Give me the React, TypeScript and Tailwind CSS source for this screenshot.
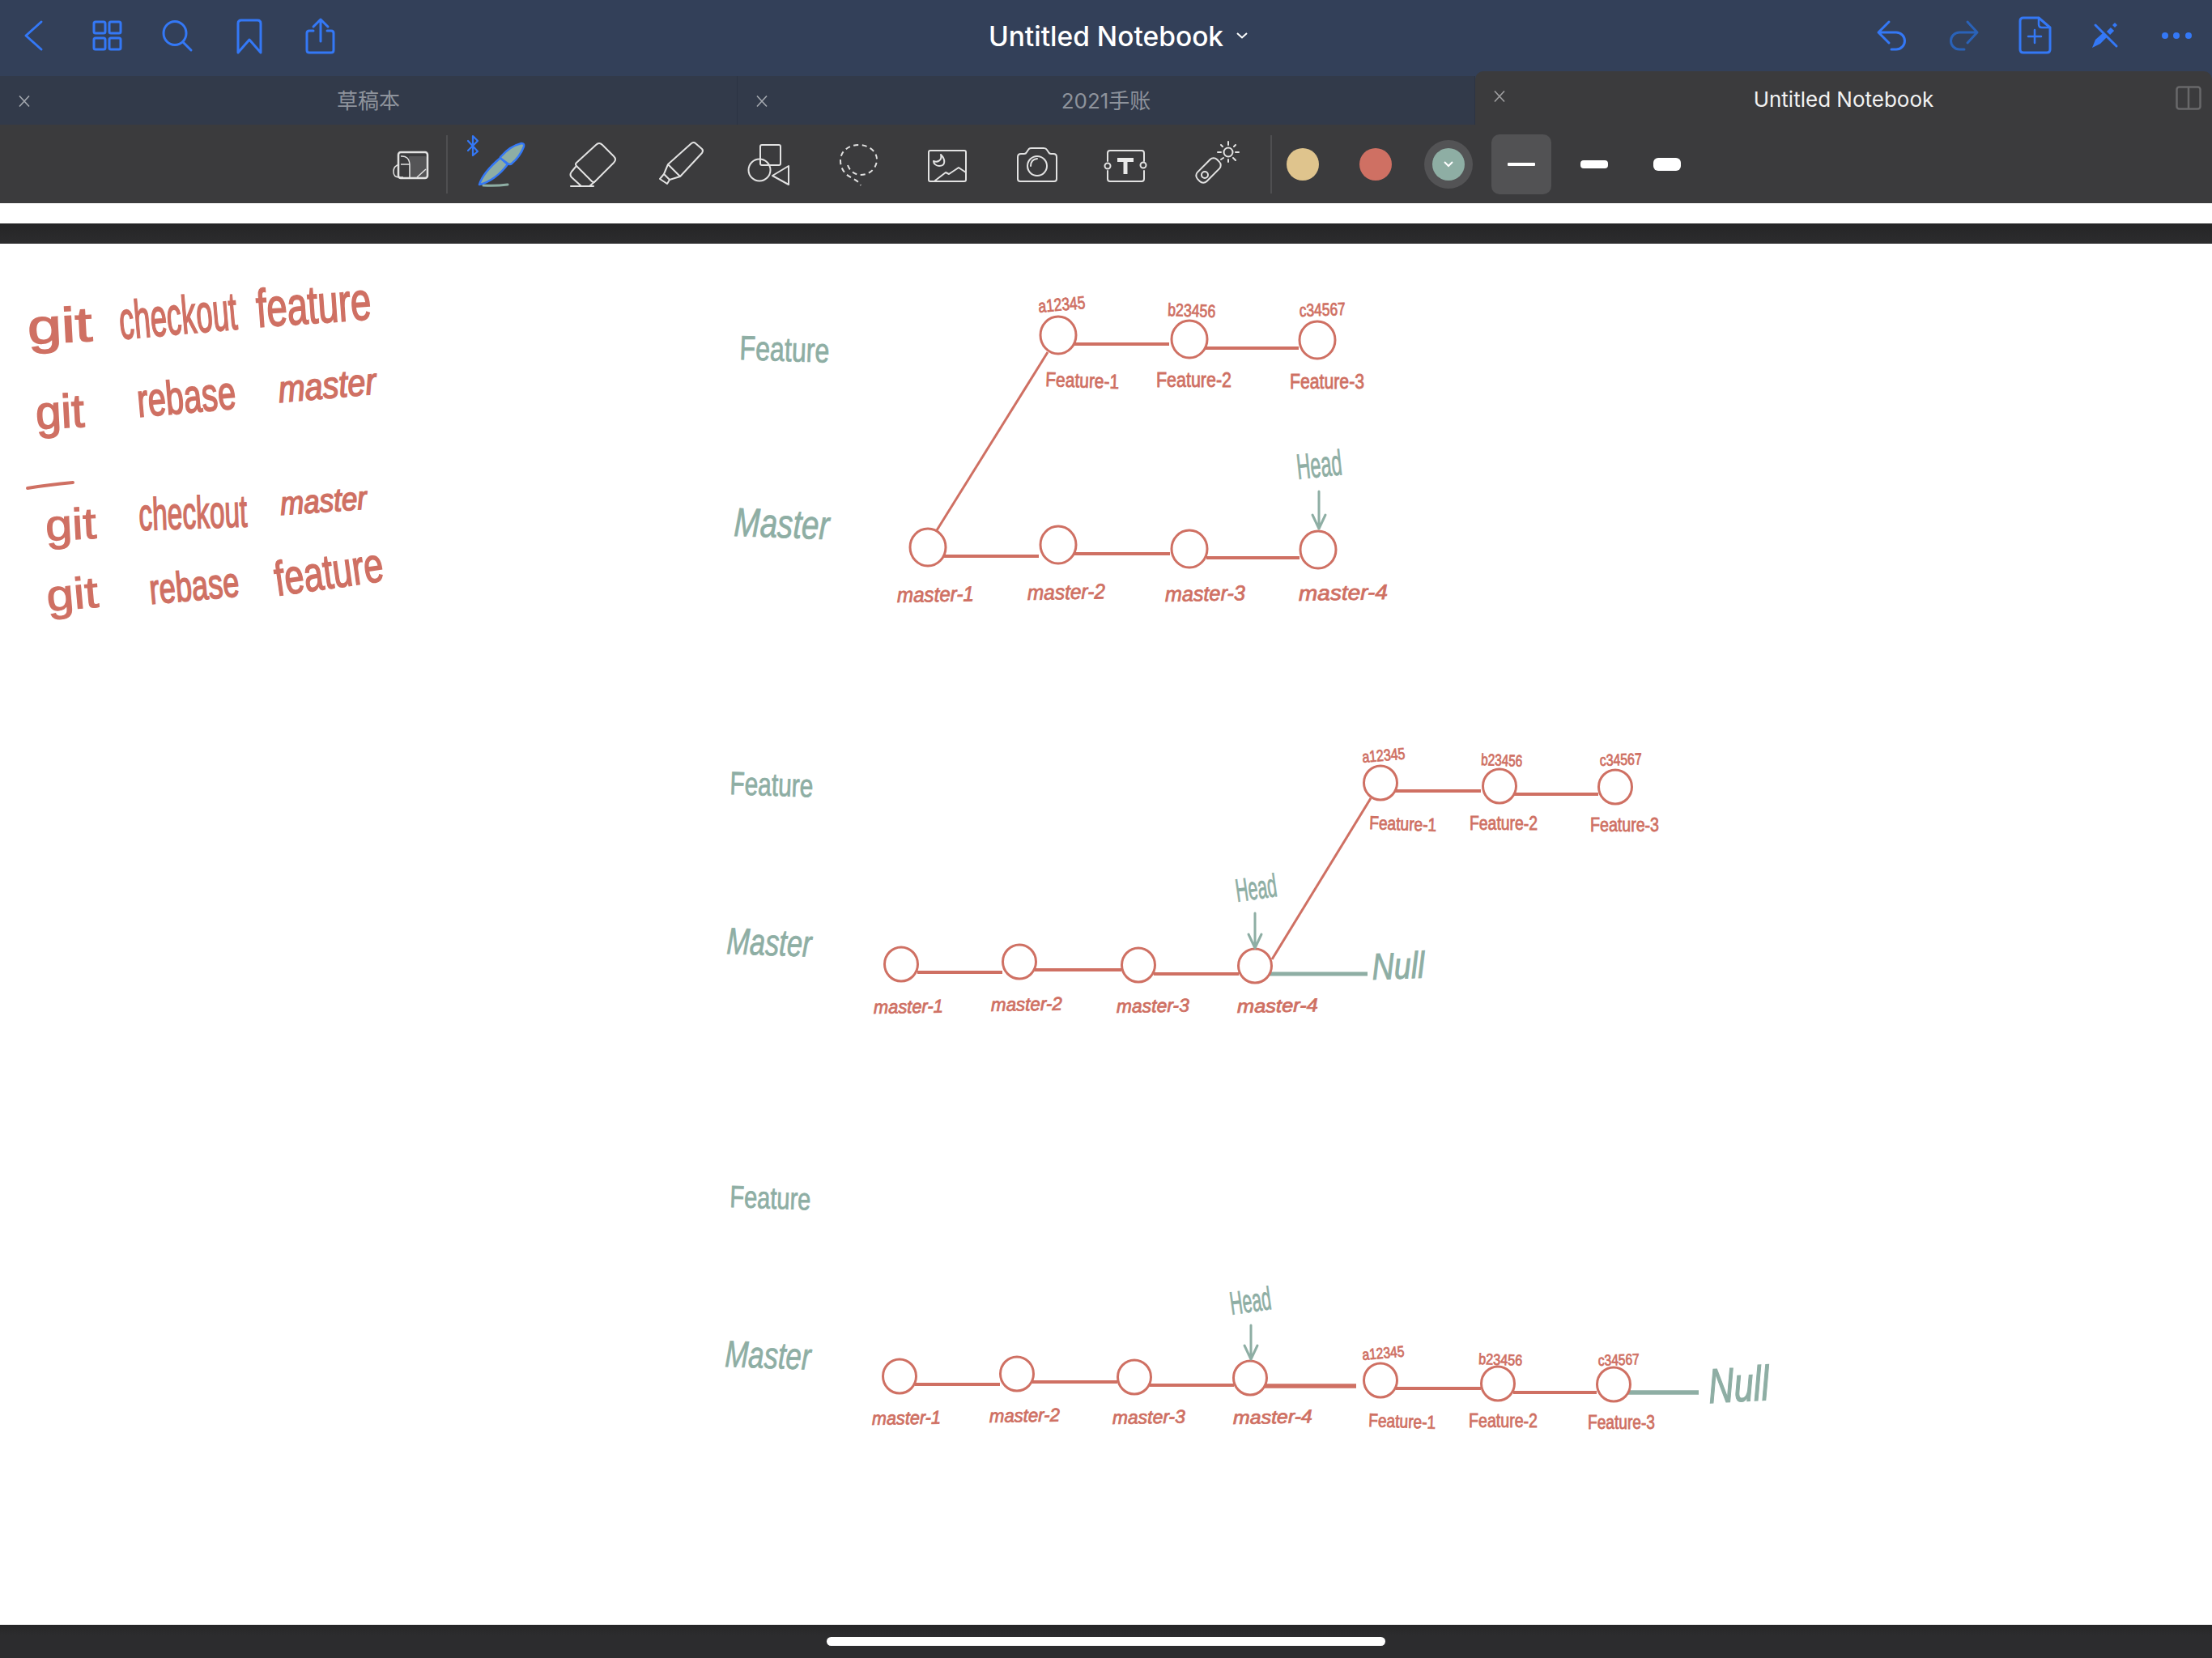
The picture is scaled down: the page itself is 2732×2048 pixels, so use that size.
import type { ReactNode } from 'react';

const blue = '#3478f6';
const ink = '#cf7063';
const sage = '#8eaea4';
const line = '#e2e2e2';

function TopIcon({ box, children }: { box: number; children: ReactNode }) {
  return (
    <svg
      viewBox={`${box} 20 48 48`}
      className="h-12 w-12 shrink-0"
      fill="none"
      stroke={blue}
      strokeWidth={3}
      strokeLinecap="round"
      strokeLinejoin="round"
    >
      {children}
    </svg>
  );
}

// tool slots are 110 wide, drawn in page coordinates
function ToolIcon({ box, children }: { box: number; children: ReactNode }) {
  return (
    <svg
      viewBox={`${box} 154 110 97`}
      className="h-[97px] w-[110px] shrink-0"
      fill="none"
      stroke={line}
      strokeWidth={2}
      strokeLinecap="round"
      strokeLinejoin="round"
    >
      {children}
    </svg>
  );
}

function Tab({ title, active }: { title: string; active?: boolean }) {
  return (
    <div
      className={
        active
          ? 'relative flex h-[66px] flex-1 items-center justify-center rounded-t-[10px] bg-[#3b3b3d] pt-[3px] text-[26px] text-[#f2f2f2]'
          : 'relative flex h-[60px] flex-1 items-center justify-center border-r border-[#2c3444] bg-[#323a4a] pt-[1px] text-[26px] text-[#8e939c]'
      }
    >
      <svg
        viewBox="0 0 16 16"
        className="absolute left-[22px] top-[23px] h-4 w-4"
        fill="none"
        stroke={active ? '#a0a0a2' : '#a5a9b0'}
        strokeWidth={1.6}
      >
        <path d="M2 1.5 14 14.5M14 1.5 2 14.5" />
      </svg>
      {title}
      {active && (
        <svg viewBox="0 0 32 30" className="absolute right-[13px] top-[18px] h-[30px] w-8" fill="none" stroke="#68686a" strokeWidth={2.5}>
          <rect x="1.5" y="1.5" width="29" height="27" rx="3" />
          <path d="M16 1.5v27" />
        </svg>
      )}
    </div>
  );
}

type Ink = { t: string; x: number; w: number; y: number; s: number; r?: number; c?: string; b?: number; u?: boolean };

function InkText({ t, x, w, y, s, r = 0, c = ink, b = 0.8, u }: Ink) {
  return (
    <text
      x={x}
      y={y}
      fontSize={s}
      textLength={w}
      lengthAdjust="spacingAndGlyphs"
      transform={`rotate(${r} ${x} ${y})`}
      fill={c}
      stroke={c}
      strokeWidth={b}
      className={u ? "font-['Liberation_Sans',sans-serif]" : "font-['Liberation_Sans',sans-serif] italic"}
    >
      {t}
    </text>
  );
}

type Node = [number, number];
type Seg = [number, number, number, number, number?, string?];

function Nodes({ nodes, rx, ry }: { nodes: Node[]; rx: number; ry: number }) {
  return (
    <>
      {nodes.map(([cx, cy]) => (
        <ellipse key={`${cx}-${cy}`} cx={cx} cy={cy} rx={rx} ry={ry} fill="#fff" stroke={ink} strokeWidth={3} />
      ))}
    </>
  );
}

function Segs({ segs }: { segs: Seg[] }) {
  return (
    <>
      {segs.map(([x1, y1, x2, y2, w = 3, c = ink]) => (
        <line key={`${x1}-${y1}`} x1={x1} y1={y1} x2={x2} y2={y2} stroke={c} strokeWidth={w} />
      ))}
    </>
  );
}

function HeadArrow({ x, y1, y2 }: { x: number; y1: number; y2: number }) {
  return (
    <path
      d={`M${x} ${y1}V${y2}M${x - 8} ${y2 - 17}L${x} ${y2}L${x + 8} ${y2 - 17}`}
      fill="none"
      stroke={sage}
      strokeWidth={3}
      strokeLinecap="round"
      strokeLinejoin="round"
    />
  );
}

const notes: Ink[] = [
  { t: 'git', x: 35, w: 80, y: 425, s: 60, r: -3, b: 1.6, u: true },
  { t: 'checkout', x: 149, w: 146, y: 419, s: 66, r: -5, b: 1.8, u: true },
  { t: 'feature', x: 318, w: 142, y: 404, s: 66, r: -4, b: 1.8, u: true },
  { t: 'git', x: 45, w: 60, y: 530, s: 58, r: -3, b: 1.6, u: true },
  { t: 'rebase', x: 171, w: 122, y: 515, s: 58, r: -5, b: 1.8, u: true },
  { t: 'master', x: 345, w: 121, y: 497, s: 46, r: -5, b: 1.6 },
  { t: 'git', x: 57, w: 63, y: 668, s: 54, r: -3, b: 1.2, u: true },
  { t: 'checkout', x: 172, w: 134, y: 655, s: 56, r: -2, b: 1.6, u: true },
  { t: 'master', x: 347, w: 107, y: 636, s: 40, r: -4, b: 1.6 },
  { t: 'git', x: 59, w: 64, y: 755, s: 54, r: -5, b: 1.2, u: true },
  { t: 'rebase', x: 186, w: 111, y: 746, s: 52, r: -5, b: 1.6, u: true },
  { t: 'feature', x: 342, w: 135, y: 736, s: 60, r: -8, b: 1.6, u: true },
];

const labels: Ink[] = [
  // first diagram
  { t: 'Feature', x: 913, w: 111, y: 444, s: 42, r: 2, c: sage, u: true },
  { t: 'Master', x: 906, w: 118, y: 662, s: 50, r: 2, c: sage },
  { t: 'Head', x: 1603, w: 56, y: 592, s: 44, r: -6, c: sage, u: true },
  { t: 'a12345', x: 1283, w: 58, y: 386, s: 22, r: -5, u: true },
  { t: 'b23456', x: 1442, w: 59, y: 390, s: 22, r: 2, u: true },
  { t: 'c34567', x: 1605, w: 57, y: 391, s: 22, r: -2, u: true },
  { t: 'Feature-1', x: 1291, w: 91, y: 477, s: 25, r: 2, u: true },
  { t: 'Feature-2', x: 1428, w: 93, y: 478, s: 25, u: true },
  { t: 'Feature-3', x: 1593, w: 92, y: 480, s: 25, u: true },
  { t: 'master-1', x: 1108, w: 95, y: 744, s: 26, r: -1 },
  { t: 'master-2', x: 1269, w: 96, y: 741, s: 26, r: -1 },
  { t: 'master-3', x: 1439, w: 99, y: 743, s: 26, r: -1 },
  { t: 'master-4', x: 1604, w: 110, y: 742, s: 26, r: -1 },
  // second diagram
  { t: 'Feature', x: 901, w: 103, y: 981, s: 40, r: 2, c: sage, u: true },
  { t: 'Master', x: 897, w: 105, y: 1178, s: 46, r: 2, c: sage },
  { t: 'Head', x: 1528, w: 51, y: 1114, s: 40, r: -8, c: sage, u: true },
  { t: 'Null', x: 1695, w: 65, y: 1210, s: 46, r: -2, c: sage, b: 1 },
  { t: 'a12345', x: 1683, w: 53, y: 942, s: 20, r: -5, u: true },
  { t: 'b23456', x: 1829, w: 51, y: 945, s: 20, r: 2, u: true },
  { t: 'c34567', x: 1976, w: 52, y: 946, s: 20, r: -2, u: true },
  { t: 'Feature-1', x: 1691, w: 83, y: 1024, s: 23, r: 2, u: true },
  { t: 'Feature-2', x: 1815, w: 84, y: 1025, s: 23, u: true },
  { t: 'Feature-3', x: 1964, w: 85, y: 1027, s: 23, u: true },
  { t: 'master-1', x: 1079, w: 86, y: 1252, s: 23, r: -1 },
  { t: 'master-2', x: 1224, w: 88, y: 1249, s: 23, r: -1 },
  { t: 'master-3', x: 1379, w: 90, y: 1251, s: 23, r: -1 },
  { t: 'master-4', x: 1528, w: 100, y: 1251, s: 23, r: -1 },
  // third diagram
  { t: 'Feature', x: 901, w: 100, y: 1491, s: 38, r: 2, c: sage, u: true },
  { t: 'Master', x: 895, w: 106, y: 1688, s: 46, r: 2, c: sage },
  { t: 'Head', x: 1521, w: 51, y: 1624, s: 40, r: -8, c: sage, u: true },
  { t: 'Null', x: 2111, w: 75, y: 1733, s: 60, r: -3, c: sage, b: 1.4 },
  { t: 'a12345', x: 1683, w: 52, y: 1680, s: 19, r: -5, u: true },
  { t: 'b23456', x: 1826, w: 54, y: 1685, s: 19, r: 2, u: true },
  { t: 'c34567', x: 1974, w: 51, y: 1687, s: 19, r: -2, u: true },
  { t: 'master-1', x: 1077, w: 85, y: 1760, s: 23, r: -1 },
  { t: 'master-2', x: 1222, w: 87, y: 1757, s: 23, r: -1 },
  { t: 'master-3', x: 1374, w: 90, y: 1759, s: 23, r: -1 },
  { t: 'master-4', x: 1523, w: 98, y: 1759, s: 23, r: -1 },
  { t: 'Feature-1', x: 1690, w: 83, y: 1762, s: 23, r: 2, u: true },
  { t: 'Feature-2', x: 1814, w: 85, y: 1763, s: 23, u: true },
  { t: 'Feature-3', x: 1961, w: 83, y: 1765, s: 23, u: true },
];

export default function App() {
  return (
    <div className="flex h-[2048px] w-[2732px] flex-col overflow-hidden bg-white font-['Inter','Noto_Sans_CJK_SC',sans-serif]">
      {/* Nav bar */}
      <header className="relative flex h-[88px] shrink-0 items-start justify-between bg-[#334059] px-5 pt-5">
        <div className="flex gap-10">
          <TopIcon box={20}>
            <path d="M51 27 32 44l19 17" />
          </TopIcon>
          <TopIcon box={108}>
            <rect x="116" y="27" width="14" height="14" rx="2" />
            <rect x="135" y="27" width="14" height="14" rx="2" />
            <rect x="116" y="47" width="14" height="14" rx="2" />
            <rect x="135" y="47" width="14" height="14" rx="2" />
          </TopIcon>
          <TopIcon box={196}>
            <ellipse cx="216" cy="41" rx="14" ry="14.5" />
            <path d="m226 52 10 10" />
          </TopIcon>
          <TopIcon box={284}>
            <path d="M294 65V29q0-4 4-4h20q4 0 4 4v36l-14-16z" />
          </TopIcon>
          <TopIcon box={372}>
            <path d="M387 38h-5q-3 0-3 3v21q0 3 3 3h27q3 0 3-3V41q0-3-3-3h-5M396 24v27M387 33l9-9 9 9" />
          </TopIcon>
        </div>
        <div className="flex gap-10">
          <TopIcon box={2312}>
            <path d="M2333 27 2320 40l13 13M2320 40h22a10.500 10.500 0 0 1 0 21h-6" />
          </TopIcon>
          <svg viewBox="2400 20 48 48" className="h-12 w-12 shrink-0" fill="none" stroke="#2a62b8" strokeWidth={3} strokeLinecap="round" strokeLinejoin="round">
            <path d="M2430 27l12 13-12 13M2442 40h-22a10.500 10.500 0 0 0 0 21h6" />
          </svg>
          <TopIcon box={2488}>
            <path d="M2518 22h-19q-4 0-4 4v35q0 4 4 4h29q4 0 4-4V34z" />
            <path d="M2518 22v8q0 4 4 4h9" strokeWidth={2.5} />
            <path d="M2513 37v16M2505 45h16" strokeWidth={2.5} />
          </TopIcon>
          <svg viewBox="2576 20 48 48" className="h-12 w-12 shrink-0" fill={blue} stroke="none">
            <path d="M2588 31l26 26" fill="none" stroke={blue} strokeWidth={3} strokeLinecap="round" />
            <path d="M2584 59l4-10 9-8 5 5-8 8z" />
            <path d="M2604 41l5-5" fill="none" stroke={blue} strokeWidth={6} />
            <path d="M2612 28l3 3-3 3-3-3z" />
          </svg>
          <svg viewBox="2664 20 48 48" className="h-12 w-12 shrink-0" fill={blue}>
            <circle cx="2674" cy="44" r="4" />
            <circle cx="2688" cy="44" r="4" />
            <circle cx="2703" cy="44" r="4" />
          </svg>
        </div>
        <div className="absolute inset-x-0 top-0 flex h-[88px] items-center justify-center pt-[2px]">
          <h1 className="relative text-[33.5px] font-medium text-white">
            Untitled Notebook
            <svg viewBox="0 0 14 8" className="absolute -right-[30px] top-[20px] h-2 w-[14px]" fill="none" stroke="#fff" strokeWidth={2}>
              <path d="m1 1 6 5.500L13 1" />
            </svg>
          </h1>
        </div>
      </header>

      {/* Tabs */}
      <div className="flex h-[66px] shrink-0 items-end bg-[#334059]">
        <Tab title="草稿本" />
        <Tab title="2021手账" />
        <Tab title="Untitled Notebook" active />
      </div>

      {/* Toolbar */}
      <div className="flex h-[97px] shrink-0 items-center bg-[#3b3b3d] pl-[479px]">
        <svg viewBox="479 154 56 97" className="h-[97px] w-14 shrink-0" fill="none" stroke={line} strokeWidth={2}>
          <path d="M505 193h20q2 0 2 2v24h-22z" fill="#555557" stroke="none" />
          <rect x="492" y="188" width="36" height="32" rx="3" strokeWidth={2.5} />
          <path d="M495 193q10-1 11 10v17M495 203h11M493 203q-7 2-7 9t7 7h5M515 219l11-10" strokeWidth={1.5} />
        </svg>
        <div className="ml-4 h-[72px] w-[2px] shrink-0 bg-[#4f4f51]" />
        <div className="ml-[10px] flex">
          <ToolIcon box={563}>
            <path d="M597 229q15 1 30-1" stroke={sage} strokeWidth={3} />
            <path d="M592 228c3-10 13-22 26-33l9 8c-9 12-22 22-35 25z" fill={sage} stroke={blue} strokeWidth={2.5} />
            <path d="M619 193c7-8 17-14 25-16q4 0 3 4c-3 8-9 16-15 21q-2 2-5 0l-8-6q-2-2 0-3z" fill={sage} stroke={blue} strokeWidth={2.5} />
            <path d="M578 174l12 13-6 5v-24l6 6-12 12" stroke={blue} strokeWidth={2.2} />
          </ToolIcon>
          <ToolIcon box={673}>
            <path d="M736 179q4-4 8 0l14 14q4 4 0 8l-23 23q-2 2-4 0l-19-19q-2-2 0-4z" />
            <path d="M711 206l-5 6q-3 4 0 7l12 11M728 230l7-6M705 230h28" />
          </ToolIcon>
          <ToolIcon box={783}>
            <path d="M854 177q3-2 5 0l8 7q2 2 0 5l-27 29-15-15zM825 203l-5 12 7 7 13-4M820 215l-5 6 9 6 3-5" />
          </ToolIcon>
          <ToolIcon box={893}>
            <rect x="939" y="179" width="25" height="25" rx="2" />
            <circle cx="938" cy="210" r="13.500" />
            <path d="m974 205-20 12 20 11z" />
          </ToolIcon>
          <ToolIcon box={1003}>
            <path d="M1047 204c3 8 9 12 16 12 12 0 20-9 20-19 0-10-10-18-22-18-13 0-23 8-23 19 0 8 3 13 7 17 5 5 15 7 18 14" strokeDasharray="6 4.500" strokeLinecap="butt" />
          </ToolIcon>
          <ToolIcon box={1113}>
            <rect x="1147" y="186" width="46" height="38" rx="2" />
            <path d="M1155 223l13-10 4 2 12-8 9 6M1162 191c6 6 6 14-2 14-4 0-7-3-7-6 5 2 11-1 9-8z" />
          </ToolIcon>
          <ToolIcon box={1223}>
            <path d="M1261 190h4q2 0 3-2l2-3q1-2 4-2h15q3 0 4 2l2 3q1 2 3 2h3q4 0 4 4v27q0 3-3 3h-42q-3 0-3-3v-27q0-4 4-4z" />
            <circle cx="1281" cy="205" r="12" />
            <path d="M1273 205q0-8 8-9" />
          </ToolIcon>
          <ToolIcon box={1333}>
            <path d="M1368 199v-10q0-3 3-3h39q3 0 3 3v10M1368 211v10q0 3 3 3h39q3 0 3-3v-10" />
            <circle cx="1368" cy="205" r="3.500" />
            <circle cx="1412" cy="204" r="3.500" />
            <path d="M1380 197.500h20M1390 197.500V215" stroke="#e8e8e8" strokeWidth={5} strokeLinecap="butt" />
          </ToolIcon>
          <ToolIcon box={1443}>
            <rect x="1475.500" y="202.500" width="34" height="16" rx="6" transform="rotate(-45 1492.500 210.500)" />
            <circle cx="1488" cy="216" r="4" />
            <circle cx="1517" cy="188" r="5.500" />
            <path d="M1508 197l3-2M1517 175v4M1517 197v3M1504 188h4M1526 188h4M1508 179l2 2M1523 195l3 3M1526 179l-2 2" />
          </ToolIcon>
        </div>
        <div className="ml-4 h-[72px] w-[2px] shrink-0 bg-[#4f4f51]" />
        <div className="ml-2 flex items-center gap-[30px]">
          <div className="flex h-[60px] w-[60px] items-center justify-center">
            <div className="h-10 w-10 rounded-full bg-[#dfc48d]" />
          </div>
          <div className="flex h-[60px] w-[60px] items-center justify-center">
            <div className="h-10 w-10 rounded-full bg-[#cf7063]" />
          </div>
          <div className="flex h-[60px] w-[60px] items-center justify-center rounded-full bg-[#535355]">
            <div className="flex h-10 w-10 items-center justify-center rounded-full bg-[#8eaea4]">
              <svg viewBox="0 0 12 8" className="h-2 w-3" fill="none" stroke="#fff" strokeWidth={2}>
                <path d="m1 1 5 5 5-5" />
              </svg>
            </div>
          </div>
        </div>
        <div className="ml-[23px] flex items-center gap-4">
          <div className="flex h-[74px] w-[74px] items-center justify-center rounded-[10px] bg-[#525254]">
            <div className="h-1 w-[34px] rounded-[1px] bg-white" />
          </div>
          <div className="flex h-[74px] w-[74px] items-center justify-center">
            <div className="h-[10px] w-[34px] rounded-[4px] bg-white" />
          </div>
          <div className="flex h-[74px] w-[74px] items-center justify-center">
            <div className="h-4 w-[34px] rounded-[6px] bg-white" />
          </div>
        </div>
      </div>

      <div className="h-[25px] shrink-0 bg-white" />
      <div className="h-[25px] shrink-0 bg-gradient-to-b from-[#252526] to-[#2c2c2e]" />

      {/* Notebook page */}
      <main className="flex-1 bg-white">
        <svg viewBox="0 301 2732 1706" className="block h-[1706px] w-[2732px]">
          {notes.map((n) => (
            <InkText key={`${n.t}-${n.x}`} {...n} />
          ))}
          <path d="M34 603q25-4 56-7" fill="none" stroke={ink} strokeWidth={4} strokeLinecap="round" />

          <Segs segs={[[1327, 425, 1444, 425, 4], [1489, 430, 1604, 430, 4], [1166, 687, 1283, 687, 4], [1327, 684, 1445, 684, 4], [1490, 689, 1605, 689, 4], [1294, 435, 1157, 655, 3]]} />
          <Nodes rx={22} ry={23} nodes={[[1307, 414], [1469, 419], [1627, 420], [1146, 676], [1307, 673], [1469, 678], [1628, 679]]} />
          <HeadArrow x={1629} y1={607} y2={653} />

          <Segs segs={[[1723, 977, 1829, 977, 4], [1869, 981, 1974, 981, 4], [1133, 1201, 1238, 1201, 4], [1278, 1198, 1385, 1198, 4], [1425, 1203, 1530, 1203, 4], [1566, 1203, 1689, 1203, 5, sage], [1693, 986, 1571, 1185, 3]]} />
          <Nodes rx={20.5} ry={21} nodes={[[1705, 967], [1852, 971], [1995, 972], [1113, 1191], [1259, 1188], [1406, 1192], [1550, 1193]]} />
          <HeadArrow x={1550} y1={1128} y2={1171} />

          <Segs segs={[[1130, 1710, 1235, 1710, 4], [1275, 1707, 1380, 1707, 4], [1420, 1711, 1524, 1711, 4], [1561, 1712, 1675, 1712, 5.5], [1724, 1715, 1829, 1715, 4], [1869, 1720, 1972, 1720, 4], [2010, 1720, 2098, 1720, 5.5, sage]]} />
          <Nodes rx={20.5} ry={21} nodes={[[1111, 1700], [1256, 1697], [1401, 1701], [1544, 1702], [1705, 1705], [1850, 1709], [1993, 1710]]} />
          <HeadArrow x={1545} y1={1637} y2={1679} />

          {labels.map((l) => (
            <InkText key={`${l.t}-${l.x}`} {...l} />
          ))}
        </svg>
      </main>

      {/* Home indicator */}
      <footer className="flex h-[41px] shrink-0 items-start justify-center bg-gradient-to-b from-[#252526] to-[#2c2c2e] to-30% pt-[15px]">
        <div className="h-[11px] w-[690px] rounded-full bg-white" />
      </footer>
    </div>
  );
}
